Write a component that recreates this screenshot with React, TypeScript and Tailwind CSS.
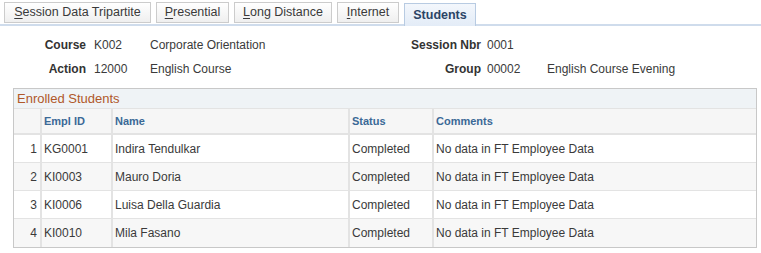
const tabs = [
  { first: "S", rest: "ession Data Tripartite", w: "w-[147px]" },
  { first: "P", rest: "resential", w: "w-[73px]" },
  { first: "L", rest: "ong Distance", w: "w-[98px]" },
  { first: "I", rest: "nternet", w: "w-[62px]" },
];

const students = [
  { id: "KG0001", name: "Indira Tendulkar" },
  { id: "KI0003", name: "Mauro Doria" },
  { id: "KI0006", name: "Luisa Della Guardia" },
  { id: "KI0010", name: "Mila Fasano" },
];

export default function App() {
  return (
    <div className="w-[761px] h-[253px] bg-white text-[12px] text-[#3a3a3a] font-['Liberation_Sans',Arial,sans-serif] overflow-hidden">
      {/* Tabs */}
      <div className="flex items-end gap-[5px] pl-[4px] pt-[3px] border-b-2 border-[#cfdcec] h-[26px]">
        {tabs.map((t) => (
          <div
            key={t.first}
            className={`${t.w} h-[21px] mb-[1px] flex items-center justify-center border border-[#cccccc] bg-gradient-to-b from-white to-[#efefef] text-[#3a3a3a] text-[12.5px]`}
          >
            <span className="underline underline-offset-2">{t.first}</span>
            {t.rest}
          </div>
        ))}
        <div className="w-[72px] h-[23px] -mb-[2px] flex items-center justify-center border border-b-0 border-[#b8cbe2] bg-gradient-to-b from-[#f3f7fc] to-[#e3ecf7] text-[#2b4466] text-[12.5px] font-bold">
          Students
        </div>
      </div>

      {/* Header fields */}
      <div className="pt-[12px] flex flex-col gap-[10px]">
        <div className="flex h-[14px] items-center">
          <div className="w-[86px] text-right font-bold text-[#333]">Course</div>
          <div className="w-[56px] ml-[8px]">K002</div>
          <div className="w-[250px]">Corporate Orientation</div>
          <div className="w-[81px] text-right font-bold text-[#333]">Session Nbr</div>
          <div className="w-[60px] ml-[6px]">0001</div>
        </div>
        <div className="flex h-[14px] items-center">
          <div className="w-[86px] text-right font-bold text-[#333]">Action</div>
          <div className="w-[56px] ml-[8px]">12000</div>
          <div className="w-[250px]">English Course</div>
          <div className="w-[81px] text-right font-bold text-[#333]">Group</div>
          <div className="w-[60px] ml-[6px]">00002</div>
          <div>English Course Evening</div>
        </div>
      </div>

      {/* Grid */}
      <div className="ml-[13px] mt-[12px] w-[744px] border border-[#c8c8c8]">
        <div className="h-[19px] bg-[#eff3f6] text-[#b0582a] text-[13px] pl-[3px] flex items-center">
          Enrolled Students
        </div>
        <div className="flex h-[27px] bg-[#f6f6f6] border-t border-b-2 border-[#e3e3e3] text-[#3b6996] font-bold text-[11px]">
          <div className="w-[26px]" />
          <div className="w-[71px] border-l-2 border-[#e3e3e3] pl-[2px] flex items-center">Empl ID</div>
          <div className="w-[237px] border-l-2 border-[#e3e3e3] pl-[2px] flex items-center">Name</div>
          <div className="w-[84px] border-l-2 border-[#e3e3e3] pl-[2px] flex items-center">Status</div>
          <div className="flex-1 border-l-2 border-[#e3e3e3] pl-[2px] flex items-center">Comments</div>
        </div>
        {students.map((s, i) => (
          <div
            key={s.id}
            className={`flex h-[28px] ${i % 2 === 0 ? "bg-white" : "bg-[#f7f7f7]"} ${i < students.length - 1 ? "border-b border-[#e3e3e3]" : ""}`}
          >
            <div className="w-[26px] pr-[3px] flex items-center justify-end">{i + 1}</div>
            <div className="w-[71px] border-l-2 border-[#e3e3e3] pl-[2px] flex items-center">{s.id}</div>
            <div className="w-[237px] border-l-2 border-[#e3e3e3] pl-[2px] flex items-center">{s.name}</div>
            <div className="w-[84px] border-l-2 border-[#e3e3e3] pl-[2px] flex items-center">Completed</div>
            <div className="flex-1 border-l-2 border-[#e3e3e3] pl-[2px] flex items-center">No data in FT Employee Data</div>
          </div>
        ))}
      </div>
    </div>
  );
}
